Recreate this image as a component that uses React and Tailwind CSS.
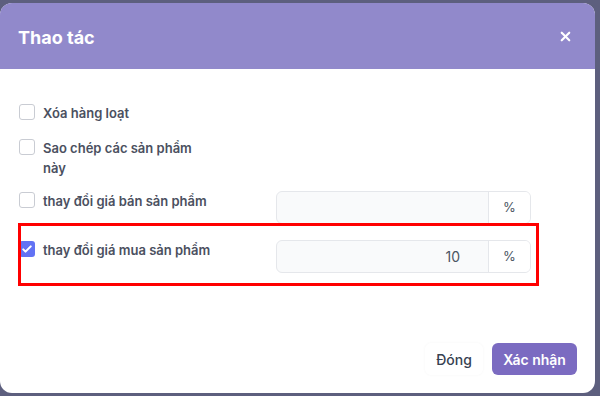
import { X } from "lucide-react";

function Checkbox({ checked }) {
  return checked ? (
    <span className="flex h-4 w-4 shrink-0 items-center justify-center rounded-[3px] bg-[#6272f4]">
      <svg viewBox="0 0 16 16" className="h-3 w-3" fill="none">
        <path d="M3 8.5l3 3 7-7" stroke="white" strokeWidth="2.8" strokeLinecap="round" strokeLinejoin="round" />
      </svg>
    </span>
  ) : (
    <span className="block h-4 w-4 shrink-0 rounded-[3px] border border-[#c9ccd3] bg-white" />
  );
}

function PercentInput({ value }) {
  return (
    <div className="flex h-[33px] w-[255px] overflow-hidden rounded-md border border-[#e5e7eb] bg-[#f9fafb]">
      <div className="flex flex-1 items-center justify-end pr-[28px] text-[14px] text-[#4b5563]">{value}</div>
      <div className="flex w-[42px] items-center justify-center border-l border-[#e5e7eb] bg-white text-[13px] text-[#4b5563]">%</div>
    </div>
  );
}

function Row({ label, checked, input, value, className }) {
  return (
    <div className={`flex items-start ${className}`}>
      <div className="flex w-[276px] items-start gap-[8px] pl-[19px]">
        <span className="mt-[1px]">
          <Checkbox checked={checked} />
        </span>
        <span className="w-[172px] text-[13px] font-semibold leading-5 text-[#4b5060]">{label}</span>
      </div>
      {input && <PercentInput value={value} />}
    </div>
  );
}

export default function App() {
  return (
    <div className="flex h-[396px] w-[600px] bg-[#5d5f7e] pb-[3px] pr-[5px] pt-[3px]" style={{ fontFamily: "Inter, 'Noto Sans', sans-serif" }}>
      <div className="relative flex w-full flex-col overflow-hidden rounded-[12px] bg-white">
        {/* header */}
        <div className="flex h-[66px] shrink-0 items-center justify-between bg-[#9189cb] pl-[18px] pr-[22px]">
          <h2 className="pt-[3px] text-[18px] font-bold text-white">Thao tác</h2>
          <X className="h-[15px] w-[15px] text-white" strokeWidth={3.5} />
        </div>

        {/* body */}
        <div className="flex-1 pt-[34px]">
          <Row label="Xóa hàng loạt" />
          <Row className="mt-[15px]" label="Sao chép các sản phẩm này" />
          <Row className="mt-[13px]" label="thay đổi giá bán sản phẩm" input value="" />
          <Row className="mt-[16px]" label="thay đổi giá mua sản phẩm" checked input value="10" />
        </div>

        {/* annotation */}
        <div className="absolute left-[18px] top-[220px] h-[63px] w-[521px] border-[3px] border-[#ff0000]" />

        {/* footer */}
        <div className="flex justify-end gap-[9px] pb-[18px] pr-[18px]">
          <button className="h-[32px] w-[58px] rounded-md bg-white text-[14px] font-medium text-[#374151] shadow-[0_0_3px_rgba(0,0,0,0.04)]">Đóng</button>
          <button className="h-[32px] w-[85px] rounded-md bg-[#7b6bc1] text-[14px] font-semibold text-white">Xác nhận</button>
        </div>
      </div>
    </div>
  );
}
